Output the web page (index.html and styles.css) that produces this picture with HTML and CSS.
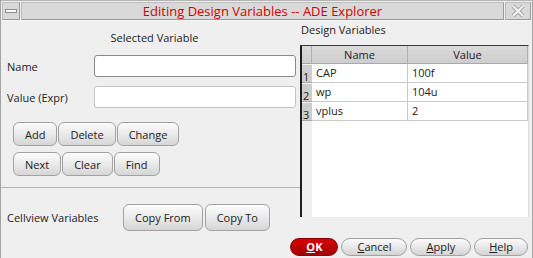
FILE: index.html
```html
<!DOCTYPE html>
<html lang="en">
<head>
  <meta charset="UTF-8">
  <title>Editing Design Variables -- ADE Explorer</title>
  <link rel="stylesheet" href="styles.css">
</head>
<body>
  <div class="window">

    <!-- Title bar -->
    <div class="titlebar">
      <div class="tb-btn"><span class="minus"></span></div>
      <div class="tb-title">Editing Design Variables -- ADE Explorer</div>
      <div class="tb-btn tb-close">
        <svg width="14" height="14" viewBox="0 0 14 14">
          <path d="M2 2 L12 12 M12 2 L2 12" stroke="#a8a8a8" stroke-width="4" fill="none"/>
          <path d="M2 2 L12 12 M12 2 L2 12" stroke="#f4f4f4" stroke-width="2" fill="none"/>
        </svg>
      </div>
    </div>

    <div class="main">
      <!-- Left: selected variable -->
      <div class="left">
        <div class="section-title center">Selected Variable</div>
        <div class="field">
          <label>Name</label>
          <input type="text">
        </div>
        <div class="field">
          <label>Value (Expr)</label>
          <input type="text">
        </div>
        <div class="btn-row first">
          <button class="btn">Add</button>
          <button class="btn">Delete</button>
          <button class="btn">Change</button>
        </div>
        <div class="btn-row">
          <button class="btn">Next</button>
          <button class="btn">Clear</button>
          <button class="btn">Find</button>
        </div>
        <div class="separator"></div>
        <div class="cellview">
          <span class="cellview-label">Cellview Variables</span>
          <button class="btn tall">Copy From</button>
          <button class="btn tall">Copy To</button>
        </div>
      </div>

      <!-- Right: design variables table -->
      <div class="right">
        <div class="section-title">Design Variables</div>
        <div class="vars">
          <div class="hcell"></div>
          <div class="hcell">Name</div>
          <div class="hcell">Value</div>

          <div class="rnum">1</div>
          <div class="cell">CAP</div>
          <div class="cell">100f</div>

          <div class="rnum">2</div>
          <div class="cell">wp</div>
          <div class="cell">104u</div>

          <div class="rnum">3</div>
          <div class="cell">vplus</div>
          <div class="cell">2</div>

          <div class="rfill"></div>
          <div class="fill"></div>
        </div>
      </div>
    </div>

    <!-- Dialog buttons -->
    <div class="footer">
      <button class="pill ok"><u>O</u>K</button>
      <button class="pill"><u>C</u>ancel</button>
      <button class="pill"><u>A</u>pply</button>
      <button class="pill help"><u>H</u>elp</button>
    </div>
  </div>
</body>
</html>
```

FILE: styles.css
```css
body {
  margin: 0;
  font-family: "Open Sans", "DejaVu Sans", sans-serif;
  font-size: 11px;
  color: #222;
}

.window {
  width: 533px;
  height: 258px;
  box-sizing: border-box;
  border-left: 1px solid #a4a4a4;
  border-right: 1px solid #a4a4a4;
  background: #efefef;
  display: flex;
  flex-direction: column;
}

/* title bar */
.titlebar {
  height: 21px;
  box-sizing: border-box;
  border-top: 1px solid #b4b4b4;
  border-bottom: 1px solid #f6f6f6;
  padding: 1px 1px 0 1px;
  display: flex;
  gap: 1px;
  background: #efefef;
}
.tb-btn, .tb-title {
  height: 18px;
  box-sizing: border-box;
  background: #d9d9d9;
  border: 1px solid #bdbdbd;
  border-right-color: #9a9a9a;
  border-bottom-color: #9a9a9a;
}
.tb-btn {
  width: 18px;
  display: flex;
  align-items: center;
  justify-content: center;
}
.tb-close { width: 26px; }
.minus {
  width: 10px;
  height: 2px;
  background: #fafafa;
  border: 1px solid #8c8c8c;
}
.tb-title {
  flex: 1;
  text-align: center;
  font-family: "Open Sans", sans-serif;
  font-size: 13px;
  line-height: 16px;
  color: #d40000;
}

.main {
  flex: 1;
  display: flex;
}

/* left panel */
.left {
  width: 299px;
  padding-top: 9px;
}
.section-title {
  line-height: 16px;
  height: 16px;
}
.center { text-align: center; padding-left: 8px; }
.field {
  display: flex;
  align-items: center;
  padding-left: 6px;
  margin-top: 9px;
}
.field:first-of-type { margin-top: 10px; }
.field label {
  width: 87px;
}
.field input {
  width: 202px;
  height: 22px;
  box-sizing: border-box;
  border: 1px solid #8a8a8a;
  border-radius: 3px;
  background: #fff;
  padding: 0 4px;
}
.field + .field input {
  border-color: #c4c4c4;
}

.btn-row {
  display: flex;
  gap: 1px;
  padding-left: 12px;
  margin-top: 6px;
}
.btn-row.first { margin-top: 14px; }

.btn {
  height: 24px;
  padding: 0 11px;
  font-family: "Open Sans", "DejaVu Sans", sans-serif;
  font-size: 11px;
  color: #222;
  background: linear-gradient(#fcfcfc, #e6e6e6 60%, #d6d6d6);
  border: 1px solid #a2a2a2;
  border-radius: 6px;
}
.btn.tall { height: 27px; }

.separator {
  height: 1px;
  background: #b4b4b4;
  margin-top: 11px;
}
.cellview {
  display: flex;
  align-items: center;
  gap: 2px;
  padding-left: 6px;
  margin-top: 16px;
}
.cellview-label { width: 114px; }

/* right panel */
.right {
  flex: 1;
  padding-top: 1px;
}
.right .section-title { padding-left: 1px; }
.vars {
  margin-top: 7px;
  width: 229px;
  height: 172px;
  box-sizing: border-box;
  border-top: 1px solid #3a3a3a;
  border-left: 2px solid #1e1e1e;
  border-right: 1px solid #dcdcdc;
  background: #fff;
  display: grid;
  grid-template-columns: 10px 96px 1fr;
  grid-template-rows: 18px 19px 19px 19px 1fr;
}
.hcell {
  background: linear-gradient(#dadada, #cecece);
  border-right: 1px solid #b0b0b0;
  border-bottom: 1px solid #a8a8a8;
  text-align: center;
  line-height: 17px;
}
.hcell:last-of-type { border-right: none; }
.rnum {
  background: #cdcdcd;
  border-top: 1px solid #f2f2f2;
  border-bottom: 1px solid #a8a8a8;
  line-height: 12px;
  padding-top: 6px;
  padding-left: 1px;
  box-sizing: border-box;
  font-size: 11px;
}
.cell {
  border-right: 1px solid #cacaca;
  border-bottom: 1px solid #cacaca;
  padding-left: 4px;
  line-height: 18px;
}
.rfill { background: #efefef; }
.fill { grid-column: span 2; }

/* dialog buttons */
.footer {
  height: 26px;
  box-sizing: border-box;
  padding: 6px 4px 0 0;
  display: flex;
  justify-content: flex-end;
  align-items: flex-start;
  gap: 3px;
}
.pill {
  height: 18px;
  padding: 0 15px;
  font-family: "Open Sans", "DejaVu Sans", sans-serif;
  font-size: 11px;
  color: #222;
  line-height: 16px;
  background: linear-gradient(#fbfbfb, #e4e4e4 60%, #d4d4d4);
  border: 1px solid #a2a2a2;
  border-radius: 9px;
}
.pill.help { padding: 0 14px; }
.pill.ok {
  color: #fff;
  font-weight: bold;
  background: linear-gradient(#d80000, #b80000 60%, #a00000);
  border-color: #8a0000;
  padding: 0 15px;
}
```
